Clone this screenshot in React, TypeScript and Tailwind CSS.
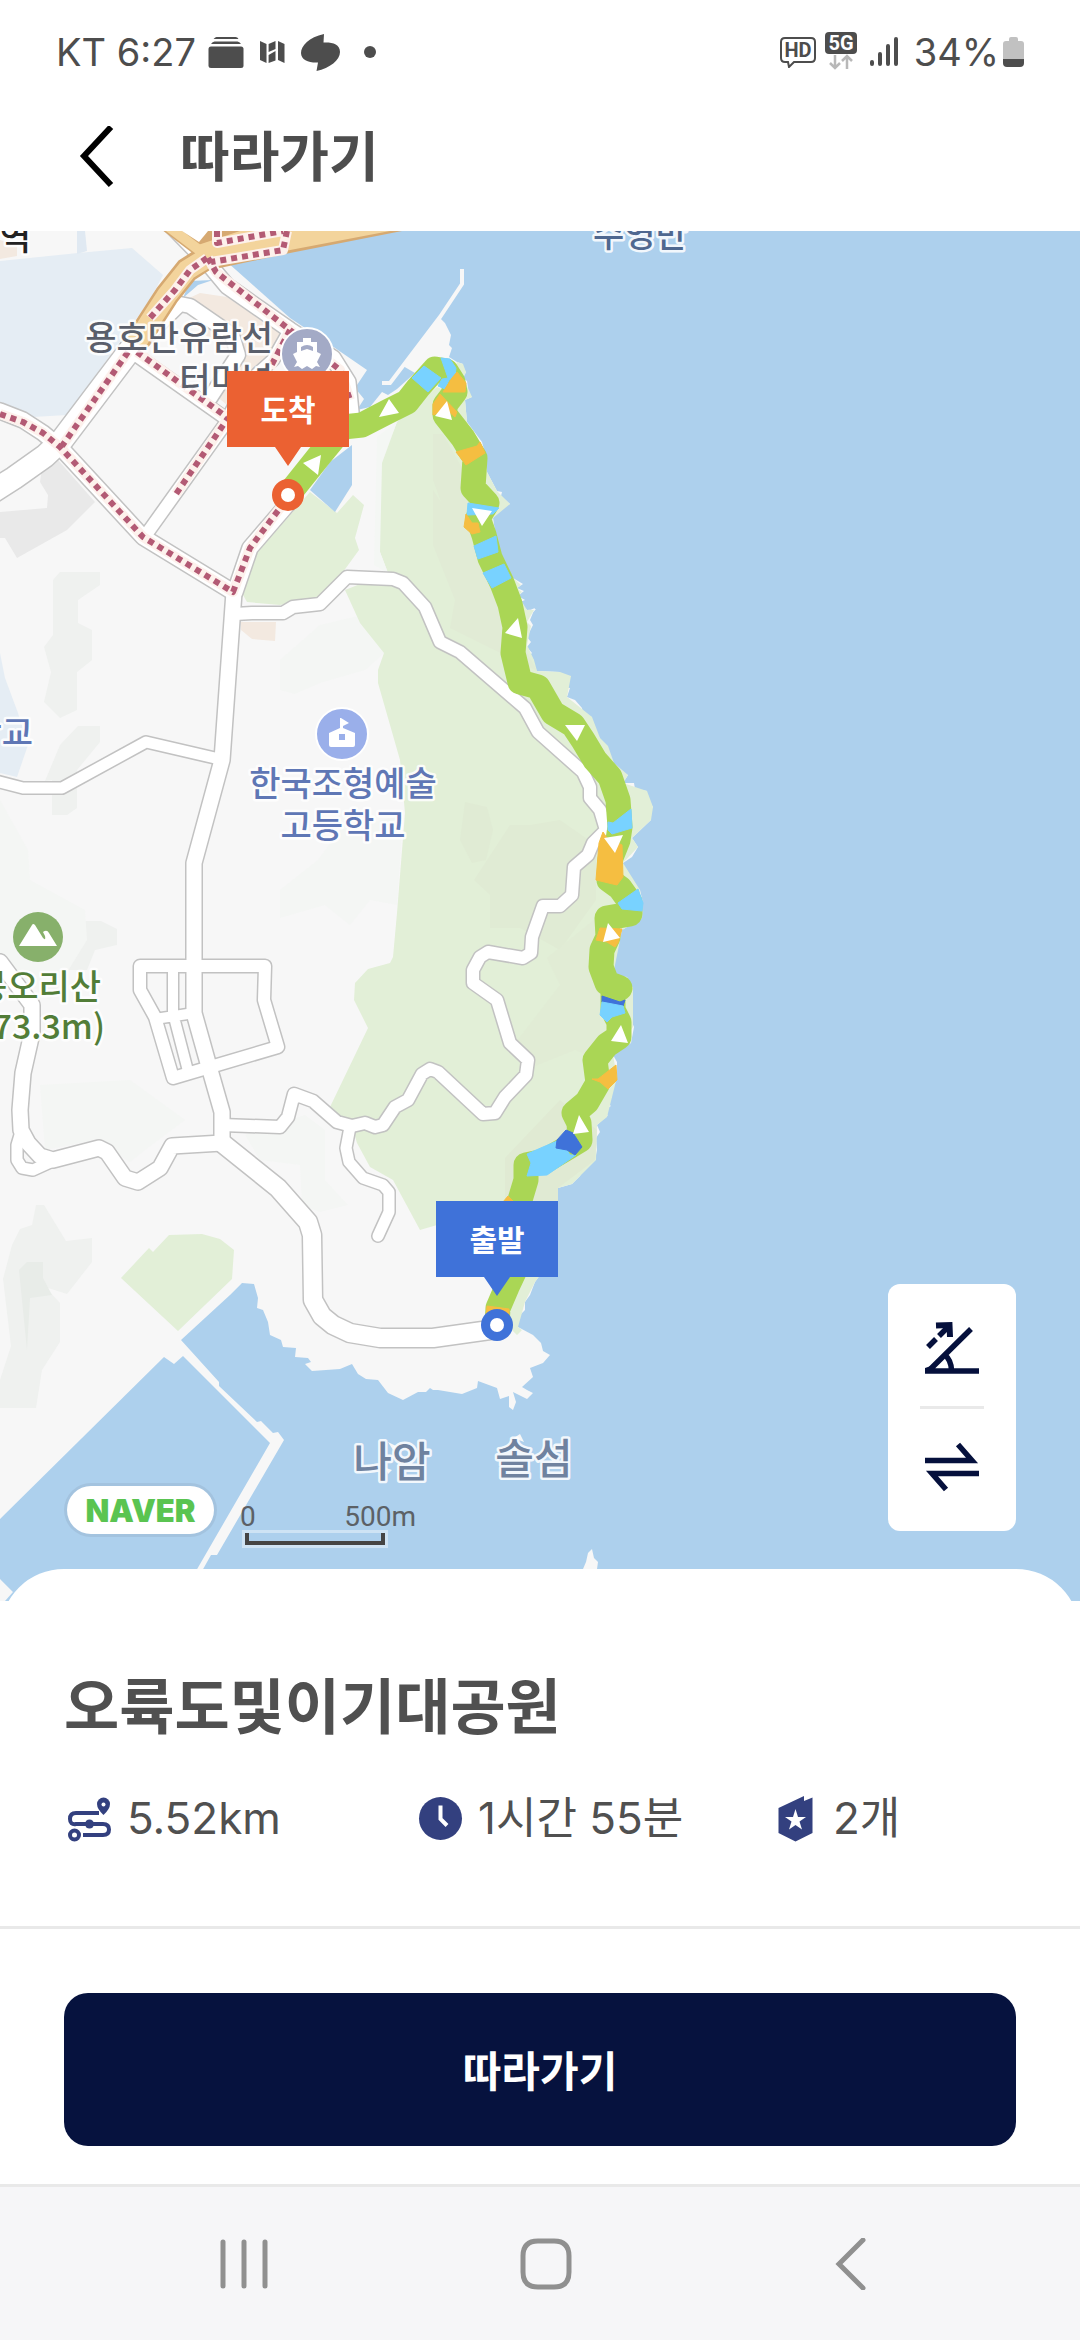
import type { ReactNode } from 'react';
import clsx from 'clsx';

// Map colours
const LAND = '#f7f7f7';
const FOREST = '#e2efd7';
const ROAD_EDGE = '#c2c2c2';
const TRAIL = { easy: '#aad655', flat: '#78d2ff', hard: '#f5be41', down: '#3f72d9' };

const landShape =
    'M0 231H226L211 268 227 262 290 318 335 348 367 370 355 388 364 399 357 410 370 407 382 392 388 395 397 389 415 373 403 366 439 317 445 323 451 335 449 345 452 348 449 357 457 362 463 364 460 368 466 372 463 378 467 381 468 388 465 391 472 397 465 400 467 422 482 442 485 453 487 472 497 491 502 492 501 496 510 504 500 508 493 518 497 545 503 563 513 578 523 584 517 588 524 591 518 596 525 600 520 602 527 610 536 609 530 616 528 623 530 610 535 608 530 620 533 625 527 637 531 642 527 647 532 653 528 657 534 660 531 665 537 671 560 672 559 680 571 676 563 687 570 688 567 697 575 700 582 708 583 715 592 717 588 724 595 728 593 733 600 738 597 745 608 746 605 757 614 763 613 770 628 775 623 783 634 783 635 789 647 791 646 798 653 807 650 812 651 820 632 838 638 847 632 857 623 863 623 877 640 890 643 903 642 918 622 930 613 960 615 970 613 975 627 977 633 988 627 1000 632 1001 630 1008 633 1012 631 1020 634 1027 631 1043 613 1055 617 1062 617 1077 607 1090 612 1097 606 1102 611 1106 600 1112 608 1115 597 1125 600 1132 596 1138 597 1150 595 1160 583 1170 580 1176 572 1184 558 1188V1250L535 1282 530 1295 525 1302 525 1310 518 1317 518 1327 533 1335 541 1343 543 1351 550 1355 543 1363 530 1368 533 1377 522 1387 527 1390 533 1393 527 1399 513 1392 516 1402 513 1410 509 1407 509 1396 500 1399 497 1388 478 1381 477 1388 462 1394 438 1390 433 1390 430 1388 426 1392 418 1392 403 1400 388 1393 378 1380 366 1379 358 1374 352 1364 340 1369 312 1371 305 1364 311 1362 308 1358 295 1357 296 1348 283 1347 281 1340 270 1335 268 1322 263 1310 257 1308 258 1298 254 1284 242 1283 230 1295 181 1340 219 1382 219 1386 257 1422 261 1421 273 1433 278 1432 284 1440 217 1555 211 1555 202 1571H196L270 1443 183 1356 174 1364 164 1357 0 1519Z';

const forests = [
    'M397 422 437 387 465 400 467 422 487 472 497 491 510 504 493 518 497 545 513 578 521 585 517 588 522 592 518 596 522 602 527 610 534 610 527 622 531 626 527 645 534 660 537 671 560 672 571 676 567 697 592 717 600 738 608 746 614 763 628 775 623 783 647 791 653 807 651 820 632 838 638 847 623 863 640 890 642 918 622 930 613 975 633 988 633 1027 613 1055 617 1077 607 1117 597 1125 596 1160 572 1184 558 1188V1250L535 1282 525 1302 518 1327 522 1330 517 1335 500 1318 505 1225 437 1225 420 1230 393 1180 370 1167 357 1143 352 1126 330 1107 368 1028 354 1000 355 983 368 969 390 963 393 957 397 913 405 813 400 760 378 683 378 670 384 653 360 623 345 590 388 573 380 552 380 463Z',
    'M310 492 337 513 353 495 364 505 355 538 359 550 343 572 320 598 280 605 247 602 243 595 257 553Z',
    'M121 1278 149 1248 153 1252 169 1235 202 1234 220 1239 234 1250 232 1279 178 1331Z',
    'M457 362 463 364 466 372 463 378 468 388 472 397 465 400 450 380Z',
];

// Hill shading, blocks and special zones
const zones = [
    { d: 'M0 261 78 253 132 248 163 275 150 300 67 415 33 417 0 407Z', fill: '#e5edf4' },
    { d: 'M77 231H85L87 251 77 254Z', fill: '#e0e9f2' },
    { d: 'M0 653 5 678 18 713 28 745 17 777 0 773Z', fill: '#e5edf4' },
    { d: 'M58 460 95 502 67 530 17 558 5 538H0V512L47 508 48 495 40 482 42 468Z', fill: '#e9e9e9' },
    { d: 'M0 240 17 245V256L0 259Z', fill: '#f3e9e0' },
    { d: 'M185 300 200 293 227 297 280 332 267 365 227 405 215 395 240 360 205 335Z', fill: '#f3e9e0' },
    { d: 'M241 622H276L275 641 252 639 241 630Z', fill: '#f3e9e0' },
    { d: 'M53 580 60 572H100V585L78 600V623L92 630V660L77 672V710L60 718 44 702 51 672 44 647 53 635Z', fill: '#eff1ef' },
    { d: 'M78 726H100V742L77 770V808L67 815H52V780L45 781 60 745Z', fill: '#eff1ef' },
    { d: 'M68 921H101L117 929V945L95 950 87 970H53L56 930Z', fill: '#eff1ef' },
    { d: 'M36 1205H44L66 1241 92 1238V1262L67 1294 45 1287 60 1303V1342L42 1370 36 1408H0V1380L11 1346 3 1279 12 1245 20 1229 32 1225Z', fill: '#eff1ef' },
    { d: 'M19 1270 27 1262H43V1278L52 1295 30 1298 27 1350 22 1300Z', fill: '#e8ece8' },
    { d: 'M280 660 320 625 362 615 384 653 365 670 320 683 295 694 280 690Z', fill: '#f4f6f4' },
    { d: 'M280 890 318 860 340 830 403 815 397 905 370 900 350 925 325 905 280 918Z', fill: '#f4f6f4' },
    { d: 'M0 800 28 850 30 880 85 910 87 940 50 1000 0 960Z', fill: '#f4f6f4' },
    { d: 'M40 1085 130 1080 185 1120 145 1150 130 1162 95 1140 45 1150Z', fill: '#f4f6f4' },
    { d: 'M245 1135 305 1115 325 1130 325 1180 348 1205 320 1212 302 1205 300 1165 260 1160Z', fill: '#f4f6f4' },
    { d: 'M382 463 397 422 377 437 374 565 388 573 380 552Z', fill: '#f4f7f4' },
    { d: 'M433 434 443 434 480 500 490 560 510 620 537 671 450 628 455 600 433 545V490L441 502 433 480Z', fill: '#e1ebd5' },
    { d: 'M465 802 487 807 493 830 486 860 472 863 460 840Z', fill: '#e0ebd4' },
    { d: 'M474 880 510 825 530 825 560 820 596 845 596 900 560 950 520 928H490V895Z', fill: '#e0ebd4' },
    { d: 'M547 958 600 915V1060L575 1050 530 1068 510 1050 560 985Z', fill: '#e1ecd5' },
    { d: 'M505 1158 560 1100 597 1130 595 1160 558 1188V1201H505Z', fill: '#e0ead3' },
];

const harbours = ['M310 490 330 462 352 445V485L335 512Z', 'M183 298 190 281 213 280 198 285Z'];

const roads = [
    { w: 22, d: 'M130 350 62 440 45 456 14 478 -8 492' },
    { w: 15, d: 'M168 222 207 262 227 286 290 330 333 358 348 382 351 412 320 450 287 505 250 548 235 592' },
    { w: 15, d: 'M-8 409 0 411 23 420 43 433 60 447 143 537 233 592' },
    { w: 12, d: 'M133 353 228 420 148 532' },
    { w: 12, d: 'M290 330 273 360 245 385 227 420' },
    { w: 14, d: 'M140 343 180 304 190 306 232 335 238 355 210 398' },
    { w: 15, d: 'M234 592 222 760 194 863V1013L208 1063 222 1112V1143' },
    { w: 12, d: 'M235 614 252 613H283L293 607 320 604 347 577 393 579 403 583 425 607 440 642 460 652 525 708 538 732 583 772 590 787V798L600 810 606 830 593 843 588 855 574 867 572 895 560 906H543L532 937 531 953 523 958 488 952 480 957 473 970V983L497 1000 510 1043 528 1060 526 1075 505 1097 495 1113 483 1114 438 1072 430 1069 422 1074 408 1100 395 1107 383 1125 375 1127 365 1123 352 1126 337 1122 313 1101 294 1094 288 1117 280 1127 222 1125' },
    { w: 11, d: 'M350 1127 346 1148 349 1162 363 1178 383 1185 389 1192V1212L378 1236' },
    { w: 18, d: 'M222 1143 278 1188 308 1222 312 1235 313 1300 322 1316 333 1325 350 1333 380 1338H433L497 1329' },
    { w: 15, d: 'M222 1143 172 1146 160 1168 138 1182 125 1178 107 1152 99 1148 53 1160 40 1156 28 1143 21 1130 20 1110 23 1073 32 1033V1005L0 962' },
    { w: 11, d: 'M20 1135 17 1145V1160L22 1168 33 1170 55 1160' },
    { w: 12, d: 'M265 966H140V990L155 1017 173 1078 278 1047 264 1000Z' },
    { w: 10, d: 'M173 967V1017M155 1019 194 1013M174 1017 188 1071' },
    { w: 11, d: 'M-8 780 23 788H62L146 742 215 758' },
];

// Metro construction lines drawn on top of the roads
const railDashes = [
    'M287 231 283 250 211 262 M217 231V243L283 231',
    'M207 258 190 270 175 290 150 318',
    'M208 258 216 272 290 330 340 370 350 400',
    'M290 330 270 368',
    'M128 352 62 446',
    'M137 352 228 418 176 494',
    'M0 414 23 422 43 433 60 447 143 537 233 592 250 548 280 508',
];

const trackLine =
    'M497 1325 498 1308 507 1287 515 1270 520 1200 526 1180V1165L545 1161 567 1148 580 1140 579 1123 574 1113 587 1102 598 1083 595 1060 607 1045 619 1037V1022L613 1010V993L620 988 607 983 601 967 602 950 608 937 607 918 630 914V902L620 888 609 880 610 860 618 840 620 827 618 800 610 777 595 760 583 740 573 725 553 713 538 687 520 682 513 653 515 627 510 604 502 583 490 558 484 535 478 518 487 503 473 488 475 458 463 438 445 415V405L455 392 453 382 446 371 435 369 418 388 407 402 387 412 362 425 343 427 320 455 288 495';

const trackParts = [
    { fill: TRAIL.flat, d: 'M412 378 424 366 441 378 428 392Z' },
    { fill: TRAIL.flat, d: 'M441 358 450 359 456 368 455 377 449 380 445 389 438 386 442 379 448 378Z' },
    { fill: TRAIL.hard, d: 'M457 372 466 383 465 392 453 392 443 392 452 378Z' },
    { fill: TRAIL.hard, d: 'M440 394 457 412 455 417 447 410 433 415V404Z' },
    { fill: TRAIL.hard, d: 'M456 452 477 446 480 442 485 453 466 465Z' },
    { fill: TRAIL.flat, d: 'M468 503 499 508 493 514 467 515Z' },
    { fill: TRAIL.hard, d: 'M466 514 472 523H478L480 532 472 534 464 527Z' },
    { fill: TRAIL.flat, d: 'M474 546 496 536 498 552 478 559Z' },
    { fill: TRAIL.flat, d: 'M483 573 504 564 511 578 492 588Z' },
    { fill: TRAIL.flat, d: 'M608 822 613 823 631 809 632 828 612 834 608 830Z' },
    { fill: TRAIL.hard, d: 'M603 832 607 838 622 845 623 877 617 885 596 880 599 843Z' },
    { fill: TRAIL.flat, d: 'M618 903 638 889 643 903 642 911 622 909Z' },
    { fill: TRAIL.hard, d: 'M600 928 622 929 618 943 615 947 607 942 596 940Z' },
    { fill: TRAIL.down, d: 'M602 996 620 1002 625 1000 623 1006 602 1002Z' },
    { fill: TRAIL.flat, d: 'M602 1002 623 1006 625 1013 612 1017 607 1022 600 1015Z' },
    { fill: TRAIL.hard, d: 'M616 1065 617 1080 608 1089 600 1082 592 1079 598 1079Z' },
    { fill: TRAIL.flat, d: 'M557 1141V1148L567 1150 570 1155H576L547 1175 527 1176 531 1163 527 1154 543 1147Z' },
    { fill: TRAIL.down, d: 'M566 1130 573 1133 582 1147 575 1155 567 1150 556 1148 557 1140Z' },
    { fill: TRAIL.hard, d: 'M503 1202 508 1196 514 1202Z' },
    { fill: TRAIL.hard, d: 'M487 1306 509 1309V1316H486Z' },
];

const arrows =
    'M303 463 321 455 318 475ZM389 399 379 417 399 413ZM447 401 435 416 452 420ZM472 508 492 511 482 526ZM518 618 505 633 522 638ZM565 725H585L577 741ZM604 838 623 835 615 853ZM608 923 603 942 620 938ZM621 1025 611 1041 628 1043ZM579 1115 573 1134 589 1132Z';

const labels = [
    { text: '역', x: 31, y: 250, anchor: 'end', fill: '#222222', size: 34 },
    { text: '수영만', x: 640, y: 247, anchor: 'middle', fill: '#4f6890', size: 34 },
    { text: '용호만유람선', x: 273, y: 350, anchor: 'end', fill: '#5a5f6b', size: 34 },
    { text: '터미널', x: 273, y: 392, anchor: 'end', fill: '#5a5f6b', size: 34 },
    { text: '학교', x: 33, y: 745, anchor: 'end', fill: '#5f77b5', size: 34 },
    { text: '한국조형예술', x: 343, y: 796, anchor: 'middle', fill: '#5f77b5', size: 34 },
    { text: '고등학교', x: 343, y: 838, anchor: 'middle', fill: '#5f77b5', size: 34 },
    { text: '봉오리산', x: 101, y: 999, anchor: 'end', fill: '#527d38', size: 34 },
    { text: '(173.3m)', x: 105, y: 1039, anchor: 'end', fill: '#527d38', size: 34 },
    { text: '나암', x: 392, y: 1477, anchor: 'middle', fill: '#6f829f', size: 42 },
    { text: '솔섬', x: 534, y: 1474, anchor: 'middle', fill: '#6f829f', size: 42 },
] as const;

function Pin({ x, y, color, label }: { x: number; y: number; color: string; label: string }) {
    return (
        <g transform={`translate(${x} ${y})`}>
            <circle r="16" fill={color} />
            <circle r="7" fill="#fff" />
            <path d="M-61 -124H61V-48H13L0 -29 -13 -48H-61Z" fill={color} />
            <text y="-74" textAnchor="middle" fill="#fff" fontSize="30" fontWeight="700">{label}</text>
        </g>
    );
}

function TrailMap() {
    return (
        <svg
            className="absolute inset-0 h-full w-full font-['Noto_Sans_CJK_KR',sans-serif]"
            viewBox="0 231 1080 1370"
            preserveAspectRatio="xMidYMid slice"
            role="img"
            aria-label="오륙도및이기대공원 코스 지도"
        >
            <rect y="231" width="1080" height="1370" fill="#add0ed" />
            <path d={landShape} fill={LAND} />
            <path d="M0 1579 13 1592 5 1601H0ZM583 1569 586 1562 588 1553 592 1549 594 1558 598 1562 597 1569ZM388 1442 396 1446 393 1450ZM386 1468 392 1470 388 1474ZM514 1438 520 1434 524 1442Z" fill={LAND} />
            <path d="M382 383H390L440 317 462 284V269" fill="none" stroke={LAND} strokeWidth="4" />
            {zones.slice(0, 17).map(z => <path key={z.d} d={z.d} fill={z.fill} />)}
            {forests.map(d => <path key={d} d={d} fill={FOREST} />)}
            {zones.slice(17).map(z => <path key={z.d} d={z.d} fill={z.fill} />)}
            {harbours.map(d => <path key={d} d={d} fill="#add0ed" />)}

            {/* Roads: edge first, then the surface */}
            <g fill="none" strokeLinejoin="round" strokeLinecap="round">
                {roads.map(r => <path key={r.d} d={r.d} stroke={ROAD_EDGE} strokeWidth={r.w + 3} />)}
                {roads.map(r => <path key={r.d} d={r.d} stroke="#fff" strokeWidth={r.w} />)}
            </g>
            <g fill="none">
                <path d="M207 257 187 270 167 295 138 340" stroke="#d6a971" strokeWidth="25" />
                <path d="M165 224 207 256" stroke="#d6a971" strokeWidth="13" />
                <path d="M190 248 215 269 285 254 402 231H203Z" fill="#d6a971" />
                <path d="M165 224 207 256" stroke="#f3d49c" strokeWidth="10" />
                <path d="M210 256 187 270 167 295 136 343" stroke="#f3d49c" strokeWidth="20" />
                <path d="M192 247 216 266 285 251 390 231H240Z" fill="#f3d49c" />
                <path d="M182 231 199 242 208 231Z" fill="#fff" />
            </g>
            <g fill="none" strokeLinejoin="round">
                {railDashes.map(d => <path key={d} d={d} stroke="#fdf1ec" strokeWidth="10" />)}
                {railDashes.map(d => <path key={d} d={d} stroke="#b35a74" strokeWidth="6" strokeDasharray="6 5" />)}
            </g>

            {/* Points of interest */}
            <circle cx="307" cy="354" r="26" fill="#a3aac6" stroke="#fff" strokeWidth="2" />
            <path d="M303 338H311V342H317V352L321 354 317 362 320 367 316 366 312 369 307 366 302 369 298 366 294 367 297 362 293 354 297 352V342H303Z" fill="#fff" />
            <path d="M301 351V347Q307 343 313 347V351L307 349Z" fill="#a3aac6" />
            <circle cx="342" cy="734" r="26" fill="#9aafea" stroke="#fff" strokeWidth="2" />
            <path d="M341 718 349 723 343 726V728L355 733V745Q355 747 353 747H331Q329 747 329 745V733L340 728V718Z" fill="#fff" />
            <rect x="339" y="734" width="6" height="6" fill="#9aafea" />
            <circle cx="38" cy="937" r="25" fill="#87b06b" />
            <path d="M19 946 32 925Q33 923 35 925L43 938Q46 941 45 936L43 932Q47 929 49 933L57 946Z" fill="#fff" />

            <g stroke="#fff" strokeWidth="5" strokeOpacity="0.85" strokeLinejoin="round" fontWeight="500" style={{ paintOrder: 'stroke' }}>
                {labels.map(l => (
                    <text key={l.text} x={l.x} y={l.y} textAnchor={l.anchor} fill={l.fill} fontSize={l.size}>{l.text}</text>
                ))}
            </g>

            {/* Recorded track, coloured by slope */}
            <path d={trackLine} fill="none" stroke={TRAIL.easy} strokeWidth="25" strokeLinejoin="round" strokeLinecap="round" />
            {trackParts.map(p => <path key={p.d} d={p.d} fill={p.fill} stroke={p.fill} />)}
            <path d={arrows} fill="#fff" />

            <Pin x={288} y={495} color="#eb6132" label="도착" />
            <Pin x={497} y={1325} color="#3f72d9" label="출발" />
        </svg>
    );
}

function StatusBar() {
    return (
        <div className="flex h-[104px] items-center justify-between px-14 font-['Inter',sans-serif] text-[38px] leading-none text-[#4d4d4d]">
            <div className="flex items-center">
                <span>KT 6:27</span>
                <svg className="ml-3" width="36" height="31" viewBox="0 0 35 31" fill="currentColor">
                    <path d="M5 2Q7 0 8 0H27Q29 0 30 2ZM2.5 7Q4 4.500 6 4.500H29Q31 4.500 32.500 7Z" />
                    <rect y="9.500" width="35" height="21.500" rx="2.500" />
                </svg>
                <svg className="ml-4" width="25" height="22" viewBox="0 0 25 22" fill="currentColor">
                    <path d="M0 0 6.500 3V22L0 19ZM8.600 3 15.500 0V8L8.600 11ZM8.600 14 15.500 10V19.500L8.600 22ZM18 0 24.500 3V22L18 19Z" />
                </svg>
                <svg className="ml-4" width="39" height="37" viewBox="0 0 39 37" fill="currentColor">
                    <path d="M23 0C8 3 0 12 0 19C0 26 8 29 17 28.500L15.500 37C29 34 39 26 39 18C39 10 31 8 22.500 8.500Z" />
                </svg>
                <span className="ml-6 h-3 w-3 rounded-full bg-current" />
            </div>
            <div className="flex items-center">
                <svg width="36" height="32" viewBox="0 0 36 32" fill="none" stroke="currentColor" strokeWidth="2">
                    <path d="M5 2H31Q35 2 35 6V22Q35 26 31 26H14L9 31 8 26H5Q1 26 1 22V6Q1 2 5 2Z" />
                    <text x="18" y="21" textAnchor="middle" fill="currentColor" stroke="none" fontSize="20" fontWeight="700" fontFamily="Roboto, sans-serif">HD</text>
                </svg>
                <svg className="ml-2" width="34" height="40" viewBox="0 0 34 40" fill="none">
                    <rect x="1" y="0" width="32" height="22" rx="4" fill="currentColor" />
                    <text x="17" y="18" textAnchor="middle" fill="#fff" fontSize="20" fontWeight="700" fontFamily="Roboto, sans-serif">5G</text>
                    <path d="M11 23V36M6 31 11 36 16 31M23 37V24M18 29 23 24 28 29" stroke="#b8b8b8" strokeWidth="2.500" />
                </svg>
                <svg className="ml-3" width="28" height="30" viewBox="0 0 28 30" stroke="currentColor" strokeWidth="4" strokeLinecap="round">
                    <path d="M2 25V27M10 17V27M18 9V27M26 2V27" />
                </svg>
                <span className="ml-4">34%</span>
                <svg className="ml-1" width="21" height="30" viewBox="0 0 21 30">
                    <path d="M6 2Q6 0 8 0H13Q15 0 15 2V4H18Q21 4 21 7V22H0V7Q0 4 3 4H6Z" fill="#c1c1c1" />
                    <path d="M0 22H21V26Q21 30 17 30H4Q0 30 0 26Z" fill="currentColor" />
                </svg>
            </div>
        </div>
    );
}

function Stat({ icon, children }: { icon: ReactNode; children: ReactNode }) {
    return (
        <li className="flex items-center gap-3">
            {icon}
            <span>{children}</span>
        </li>
    );
}

const navItems = [
    { label: '최근 앱', d: 'M5 4V48M26 4V48M47 4V48' },
    { label: '홈', d: 'M18 3H34Q49 3 49 18V34Q49 49 34 49H18Q3 49 3 34V18Q3 3 18 3Z' },
    { label: '뒤로', d: 'M40 2 16 26 40 50' },
];

export default function App() {
    return (
        <div className="flex min-h-screen flex-col bg-white font-['Inter','Noto_Sans_CJK_KR',sans-serif] text-[#505050]">
            <StatusBar />

            <header className="flex h-[127px] items-center gap-14 pb-5 pl-[68px]">
                <button type="button" aria-label="뒤로가기">
                    <svg width="56" height="64" viewBox="0 0 56 64" fill="none" stroke="#000" strokeWidth="6">
                        <path d="M43 1 16 30 43 59" />
                    </svg>
                </button>
                <h1 className="text-[54px] font-bold leading-none text-[#4d4d4d]">따라가기</h1>
            </header>

            <main className="relative min-h-[600px] flex-1 overflow-hidden">
                <TrailMap />

                <div className="absolute bottom-14 left-[67px] flex items-end gap-[26px]">
                    <div className="mb-[11px] flex h-12 w-[147px] items-center justify-center rounded-full bg-white text-[31px] font-black leading-none text-[#5ac451] ring-3 ring-[#a3c3df]">
                        NAVER
                    </div>
                    <div className="w-[176px] font-['Roboto',sans-serif] text-[28px] leading-8 text-[#5c6166]">
                        <div className="flex justify-between">
                            <span>0</span>
                            <span>500m</span>
                        </div>
                        <div className="ml-[5px] h-3 w-[140px] border-4 border-t-0 border-[#444] ring-3 ring-white/40" />
                    </div>
                </div>

                <div className="absolute bottom-[70px] right-16 flex w-32 flex-col items-center gap-[26px] rounded-xl bg-white py-8">
                    <button type="button" aria-label="경사도">
                        <svg width="64" height="64" viewBox="0 0 64 64" fill="none" stroke="#05103c" strokeWidth="5.500">
                            <path d="M51 13 9 54.500M5 55H59M25 39Q31 44 31.500 54M8 31 16 23M19 20 28 11" />
                            <path d="M16 9.500 29.500 9 30 21" strokeWidth="6" />
                            <path d="M5 52 11 50V56H5Z" fill="#05103c" stroke="none" />
                        </svg>
                    </button>
                    <hr className="h-[3px] w-16 border-0 bg-[#e9e9e9]" />
                    <button type="button" aria-label="방향 전환">
                        <svg width="64" height="64" viewBox="0 0 64 64" fill="none" stroke="#05103c" strokeWidth="5.500">
                            <path d="M5 25.500H52L38 9.500M59 38.500H12L26 54.500" />
                        </svg>
                    </button>
                </div>
            </main>

            <section className="relative -mt-8 rounded-t-[64px] bg-white pt-[102px]">
                <h2 className="px-16 text-6xl font-bold leading-[72px]">오륙도및이기대공원</h2>
                <ul className="mt-12 grid grid-cols-[351fr_355fr_246fr] px-16 text-[44px] leading-[54px]">
                    <Stat
                        icon={
                            <svg width="51" height="51" viewBox="0 0 51 51" fill="none" stroke="#33407f" strokeWidth="4">
                                <path d="M35 20H12Q6 20 6 26T12 31H39Q45 31 45 36.500T39 42H19" />
                                <circle cx="25.500" cy="31" r="4.500" fill="#33407f" stroke="none" />
                                <circle cx="10.500" cy="42" r="4.500" />
                                <path d="M39.500 22Q33 16 33 11A6.500 6.500 0 0 1 46 11Q46 16 39.500 22Z" fill="#33407f" stroke="none" />
                                <circle cx="39.500" cy="11.500" r="2" fill="#fff" stroke="none" />
                            </svg>
                        }
                    >
                        5.52km
                    </Stat>
                    <Stat
                        icon={
                            <svg width="51" height="51" viewBox="0 0 51 51">
                                <circle cx="25.500" cy="25.500" r="21.500" fill="#33407f" />
                                <path d="M25.500 12.500V26L32 32.500" fill="none" stroke="#fff" strokeWidth="4" />
                            </svg>
                        }
                    >
                        1시간 55분
                    </Stat>
                    <Stat
                        icon={
                            <svg width="51" height="51" viewBox="0 0 51 51">
                                <path d="M8.500 15 34 3V8L42.500 4.500V40L25.500 48.500 8.500 40Z" fill="#33407f" />
                                <path d="M25.500 16 28 24H36L29.500 28.500 32 36.500 25.500 32 19 36.500 21.500 28.500 15 24H23Z" fill="#fff" />
                            </svg>
                        }
                    >
                        2개
                    </Stat>
                </ul>
                <div className="mt-[81px] border-y-3 border-[#e9e9e9] px-16 pb-[38px] pt-16">
                    <button type="button" className="h-[153px] w-full rounded-3xl bg-[#06123e] pt-1 text-[42px] font-bold text-white">
                        따라가기
                    </button>
                </div>
            </section>

            <nav className="flex h-[153px] items-center bg-[#f6f6f8] pl-[93px] pr-20">
                {navItems.map((item, i) => (
                    <button key={item.label} type="button" aria-label={item.label} className="flex flex-1 justify-center">
                        <svg
                            className={clsx('text-[#909090]', i === 1 && 'text-[#8c8c8c]')}
                            width="52"
                            height="52"
                            viewBox="0 0 52 52"
                            fill="none"
                            stroke="currentColor"
                            strokeWidth="5"
                            strokeLinecap="round"
                        >
                            <path d={item.d} />
                        </svg>
                    </button>
                ))}
            </nav>
        </div>
    );
}
